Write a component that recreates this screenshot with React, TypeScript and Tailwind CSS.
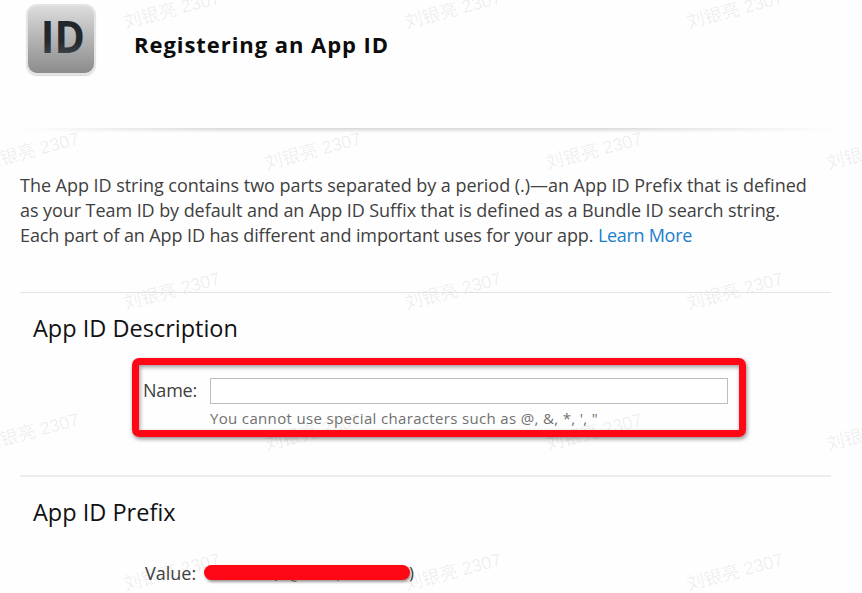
const marks = [
  [171.5, 10], [453, 10], [734.5, 10],
  [30.5, 150.5], [312.5, 150.5], [594, 150.5], [875, 150.5],
  [171.5, 291], [453, 291], [734.5, 291],
  [30.5, 431.5], [312.5, 431.5], [594, 431.5], [875, 431.5],
  [171.5, 572], [453, 572], [734.5, 572],
];

function Watermarks() {
  return (
    <div className="pointer-events-none absolute inset-0 overflow-hidden">
      {marks.map(([x, y], i) => (
        <span
          key={i}
          className="absolute -translate-x-1/2 -translate-y-1/2 -rotate-[15deg] whitespace-nowrap font-['Liberation_Sans','Noto_Sans_CJK_SC',sans-serif] text-[18px] leading-none text-black/[0.075]"
          style={{ left: x, top: y }}
        >
          刘银亮 2307
        </span>
      ))}
    </div>
  );
}

function AppIdIcon() {
  return (
    <div className="h-[71px] w-[70px] rounded-[11px] border-2 border-[#e4e4e4] bg-linear-to-b from-[#dcdcdc] to-[#8c8c8c] shadow-[0_1px_1px_rgba(0,0,0,0.15)]">
      <svg viewBox="0 0 66 67" className="h-[67px] w-[66px]">
        <defs>
          <linearGradient id="ink" x1="0" y1="0" x2="0" y2="1">
            <stop offset="0" stopColor="#1d242a" />
            <stop offset="0.6" stopColor="#23292f" />
            <stop offset="1" stopColor="#5b5e61" />
          </linearGradient>
        </defs>
        <text
          x="12.8"
          y="47.3"
          textLength="44"
          lengthAdjust="spacingAndGlyphs"
          fontSize="44"
          fill="url(#ink)"
          className="font-['Open_Sans',sans-serif] font-bold"
        >
          ID
        </text>
      </svg>
    </div>
  );
}

function Redaction() {
  return (
    <div className="relative ml-[8px] h-[15px] w-[206px] rounded-full bg-[#ff0715] shadow-[1px_2px_3px_rgba(0,0,0,0.4)]">
      <svg viewBox="0 0 206 3" className="absolute left-0 top-[15px] h-[3px] w-[206px]">
        <path d="M71 0.3h2M87 0l3 1.2h2.5M134 0v1.2" stroke="#5a4a4a" strokeWidth="1" fill="none" />
      </svg>
    </div>
  );
}

export default function App() {
  return (
    <div className="relative h-[593px] w-[862px] overflow-hidden bg-[#fefefe] font-['Open_Sans','Noto_Sans',sans-serif] text-[#404040] [font-feature-settings:'liga']">
      <Watermarks />
      <div className="relative">
        <header className="flex h-[128px] items-start pl-[26px] pt-[4px]">
          <AppIdIcon />
          <h1 className="ml-[38px] mt-[24px] text-[22px] font-bold leading-[32px] tracking-[0.94px] text-[#0c0c0c]">Registering an App ID</h1>
        </header>
        <div className="mx-[20px] h-[5px] bg-linear-to-b from-[#d6d6d6] to-transparent [mask-image:linear-gradient(to_right,transparent,black_25%,black_70%,transparent)]" />
        <main className="ml-[20px] w-[811px]">
          <p className="h-[159px] whitespace-nowrap pt-[40px] text-[18px] leading-[25px]">
            <span className="tracking-[-0.035px]">The App ID string contains two parts separated by a period (.)—an App ID Prefix that is defined</span>
            <br />
            <span className="tracking-[-0.07px]">as your Team ID by default and an App ID Suffix that is defined as a Bundle ID search string.</span>
            <br />
            <span className="tracking-[-0.11px]">Each part of an App ID has different and important uses for your app. </span>
            <a className="tracking-[-0.3px] text-[#1a80cb]">Learn More</a>
          </p>
          <section className="h-[183px] border-t border-[#e3e3e3] pl-[13px] pt-[19px]">
            <h2 className="text-[23.5px] leading-[32px] text-[#111]">App ID Description</h2>
            <div className="ml-[99px] mt-[14px] h-[79px] w-[614px] rounded-[7px] border-[7.5px] border-[#ff0715] shadow-[1px_2px_4px_rgba(0,0,0,0.45),inset_1px_2px_4px_rgba(0,0,0,0.4)]">
              <div className="flex pl-[4px] pt-[13px]">
                <label htmlFor="name" className="-mt-px w-[67px] text-[18px] leading-[26px] tracking-[-0.2px]">Name:</label>
                <div>
                  <input id="name" className="block h-[26px] w-[518px] border border-[#bdbdbd] bg-white" />
                  <p className="mt-[4px] whitespace-nowrap text-[15px] leading-[20px] tracking-[0.34px] text-[#707070]">
                    You cannot use special characters such as @, &amp;, *, ', "
                  </p>
                </div>
              </div>
            </div>
          </section>
          <section className="border-t-2 border-[#ededed] pl-[13px] pt-[19px]">
            <h2 className="text-[23.5px] leading-[32px] text-[#111]">App ID Prefix</h2>
            <div className="mt-[32px] flex h-[26px] items-center pl-[112px] text-[18px] leading-[26px]">
              <span className="w-[51px]">Value:</span>
              <div className="-mt-px">
                <Redaction />
              </div>
              <span className="-ml-px text-[17px]">)</span>
            </div>
          </section>
        </main>
      </div>
    </div>
  );
}
